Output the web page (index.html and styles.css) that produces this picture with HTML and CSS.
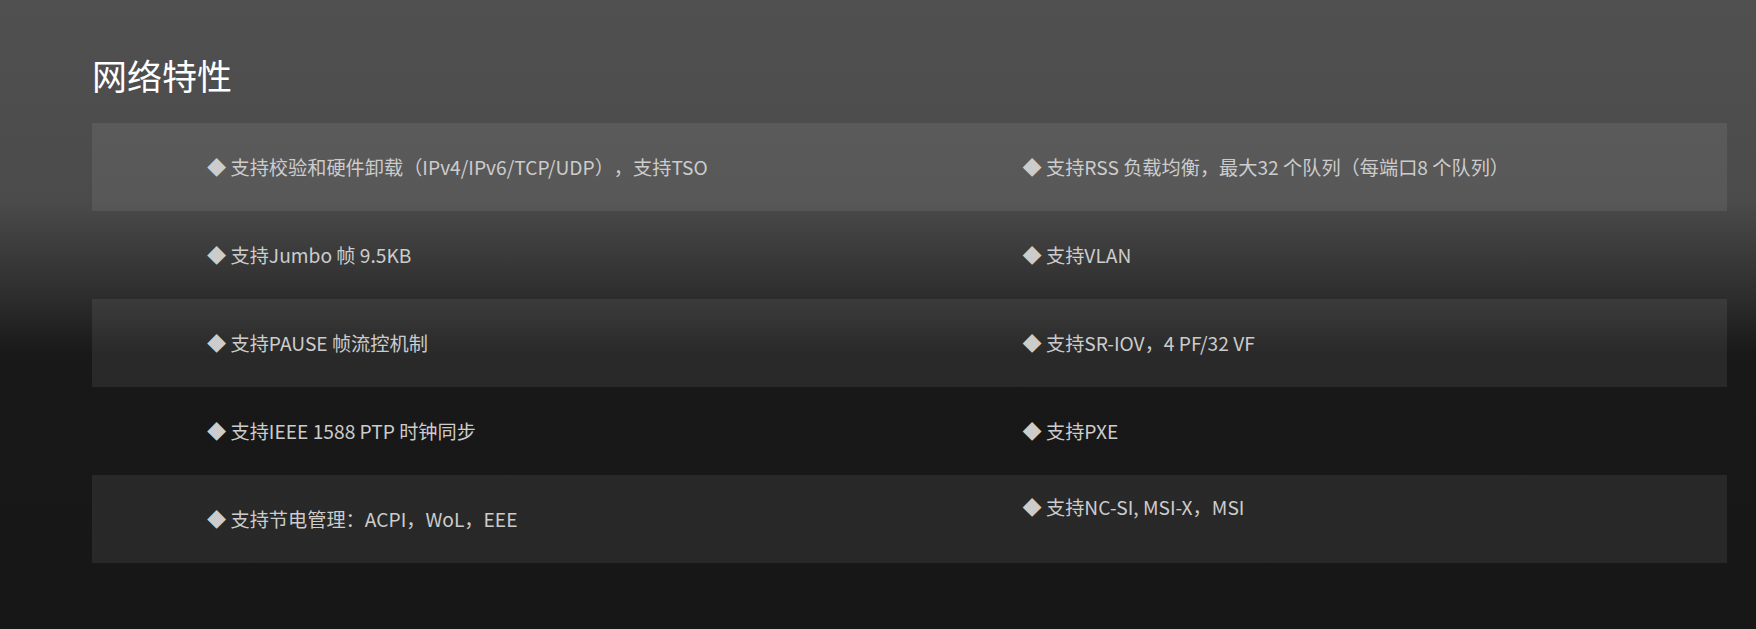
FILE: index.html
```html
<!DOCTYPE html>
<html lang="zh-CN">
<head>
<meta charset="utf-8">
<title>网络特性</title>
<link rel="stylesheet" href="styles.css">
</head>
<body>
<section class="features">
  <h2 class="features__title">网络特性</h2>
  <div class="features__table">
    <div class="row row--shade">
      <div class="cell">◆ 支持校验和硬件卸载（IPv4/IPv6/TCP/UDP），支持TSO</div>
      <div class="cell">◆ 支持RSS 负载均衡，最大32 个队列（每端口8 个队列）</div>
    </div>
    <div class="row">
      <div class="cell">◆ 支持Jumbo 帧 9.5KB</div>
      <div class="cell">◆ 支持VLAN</div>
    </div>
    <div class="row row--shade">
      <div class="cell">◆ 支持PAUSE 帧流控机制</div>
      <div class="cell">◆ 支持SR-IOV，4 PF/32 VF</div>
    </div>
    <div class="row">
      <div class="cell">◆ 支持IEEE 1588 PTP 时钟同步</div>
      <div class="cell">◆ 支持PXE</div>
    </div>
    <div class="row row--shade">
      <div class="cell">◆ 支持节电管理：ACPI，WoL，EEE</div>
      <div class="cell cell--top">◆ 支持NC-SI, MSI-X，MSI</div>
    </div>
  </div>
</section>
</body>
</html>
```
FILE: styles.css
```css
html, body {
  margin: 0;
  padding: 0;
}

body {
  width: 1756px;
  height: 629px;
  overflow: hidden;
  background: linear-gradient(to bottom, #505050 0px, #4b4b4b 200px, #2c2c2c 300px, #181818 355px, #171717 629px);
  font-family: "Noto Sans CJK SC", "Noto Sans", sans-serif;
}

.features {
  padding: 50px 29px 0 92px;
}

.features__title {
  margin: 0 0 23px;
  font-size: 35px;
  line-height: 50px;
  font-weight: 400;
  color: #ffffff;
}

.features__table {
  display: flex;
  flex-direction: column;
}

.row {
  display: grid;
  grid-template-columns: 1fr 1fr;
  height: 88px;
}

.row--shade {
  background: rgba(255, 255, 255, 0.075);
}

.cell {
  display: flex;
  align-items: center;
  padding-left: 115px;
  font-size: 19.2px;
  line-height: 24px;
  color: #cccccc;
  white-space: nowrap;
  text-spacing-trim: space-all;
}

.cell + .cell {
  padding-left: 113px;
}

.cell--top {
  padding-bottom: 24px;
}
```
